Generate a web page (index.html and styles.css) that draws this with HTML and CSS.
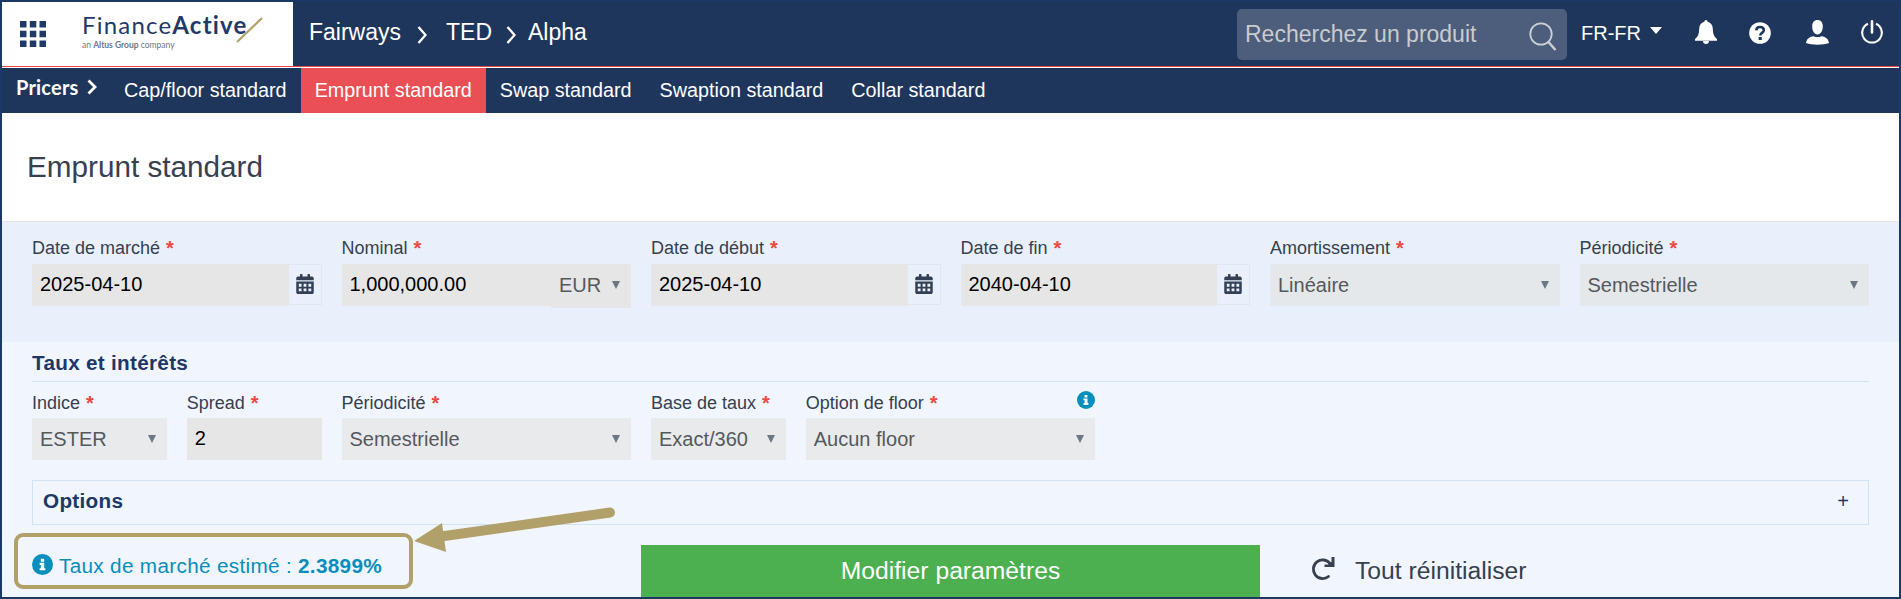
FILE: index.html
```
<!DOCTYPE html>
<html lang="fr">
<head>
  <meta charset="UTF-8">
  <meta name="viewport" content="width=device-width, initial-scale=1">
  <title>Emprunt standard</title>
  <link rel="stylesheet" href="styles.css">
</head>
<body>

  <svg class="sprite" width="0" height="0">
    <symbol id="icon-calendar" viewBox="0 0 448 512">
      <path fill="currentColor" fill-rule="evenodd" d="M0 464c0 26.500 21.500 48 48 48h352c26.500 0 48-21.500 48-48V192H0v272zM64 252h72v72h-72zM188 252h72v72h-72zM312 252h72v72h-72zM64 372h72v72h-72zM188 372h72v72h-72zM312 372h72v72h-72zM400 64h-48V16c0-9-7-16-16-16h-32c-9 0-16 7-16 16v48H160V16c0-9-7-16-16-16h-32c-9 0-16 7-16 16v48H48C21.500 64 0 85.500 0 112v48h448v-48c0-26.500-21.500-48-48-48z"/>
    </symbol>
    <symbol id="icon-info" viewBox="0 0 22 22">
      <circle cx="11" cy="11" r="11" fill="currentColor"/>
      <path fill="#fff" d="M9.200 5h3.600v3H9.200zM8 9.200h4.800v5.600H14V17H8v-2.200h1.300v-3.400H8z"/>
    </symbol>
  </svg>

  <header class="topbar">
    <div class="brand">
      <svg class="apps" viewBox="0 0 26 26" width="26" height="26">
        <path fill="#1f3a68" d="M0 0h6.500v6.500H0zM9.800 0h6.500v6.500h-6.500zM19.500 0H26v6.500h-6.500zM0 9.800h6.500v6.500H0zM9.800 9.800h6.500v6.500h-6.500zM19.500 9.800H26v6.500h-6.500zM0 19.500h6.500V26H0zM9.800 19.500h6.500V26h-6.500zM19.500 19.500H26V26h-6.500z"/>
      </svg>
      <div class="logo">
        <div class="logo-name">Finance<b>Active</b></div>
        <div class="logo-sub">an <b>Altus Group</b> company</div>
        <svg class="logo-slash" viewBox="0 0 28 26" width="28" height="26"><path d="M1 25 26 1" stroke="#b2a06b" stroke-width="2.200"/></svg>
      </div>
    </div>
    <nav class="breadcrumb">
      <span class="crumb-1">Fairways</span>
      <svg viewBox="0 0 10 18" width="10" height="18"><path d="M1.500 1 8.500 9 1.500 17" fill="none" stroke="#fff" stroke-width="2.300"/></svg>
      <span class="crumb-2">TED</span>
      <svg viewBox="0 0 10 18" width="10" height="18"><path d="M1.500 1 8.500 9 1.500 17" fill="none" stroke="#fff" stroke-width="2.300"/></svg>
      <span class="crumb-3">Alpha</span>
    </nav>
    <div class="search">
      <span>Recherchez un produit</span>
      <svg viewBox="0 0 28 29" width="28" height="29"><circle cx="12" cy="12" r="10.700" fill="none" stroke="#ccd0d6" stroke-width="1.800"/><path d="M19 19.500 26.500 28" stroke="#ccd0d6" stroke-width="2.500"/></svg>
    </div>
    <div class="lang">FR-FR <i class="caret"></i></div>
    <div class="tools">
      <svg class="bell" viewBox="0 0 22 24" width="22" height="24"><path fill="#fff" d="M11 0c1 0 1.600.7 1.600 1.800 3.400.8 5.100 3.400 5.200 7 .1 5 1.200 8 4.200 10.200v1.700H0V19C3 16.800 4.100 13.800 4.200 8.800c.1-3.600 1.800-6.200 5.200-7C9.400.7 10 0 11 0zM8 21h6c0 1.800-1.200 3-3 3s-3-1.200-3-3z"/></svg>
      <svg class="help" viewBox="0 0 22 22" width="22" height="22"><circle cx="11" cy="11" r="10.800" fill="#fff"/><path d="M7.300 8.300C7.500 6 9 5 11 5c2.200 0 3.800 1.200 3.800 3.200 0 2.700-3.500 2.700-3.500 5.200" fill="none" stroke="#1f365c" stroke-width="2.600"/><path fill="#1f365c" d="M9.600 15h3.200v3H9.600z"/></svg>
      <svg class="user" viewBox="0 0 23 25" width="23" height="25"><path fill="#fff" d="M11.500 0c3.500 0 5.300 2.500 5.300 6.300 0 4.500-2 8.200-5.300 8.200S6.200 10.800 6.200 6.300C6.200 2.500 8 0 11.500 0zM0 23c.5-4 3-6 7.500-6.800 2.500 1.200 5.500 1.200 8 0C20 17 22.500 19 23 23c-6 2.200-17 2.200-23 0z"/></svg>
      <svg class="power" viewBox="0 0 22 24" width="22" height="24"><path d="M7 3.800a9.800 9.800 0 1 0 8 0" fill="none" stroke="#fff" stroke-width="2.100"/><path d="M11 1.300v11.200" stroke="#fff" stroke-width="2.600" stroke-linecap="round"/></svg>
    </div>
  </header>

  <nav class="subnav">
    <div class="pricers">Pricers <svg viewBox="0 0 10 16" width="10" height="16"><path d="M1.500 1.500 8 8 1.500 14.500" fill="none" stroke="#fff" stroke-width="2.800"/></svg></div>
    <a>Cap/floor standard</a>
    <a class="active">Emprunt standard</a>
    <a>Swap standard</a>
    <a>Swaption standard</a>
    <a>Collar standard</a>
  </nav>

  <h1>Emprunt standard</h1>

  <section class="main-params">
    <div class="field wide">
      <label>Date de marché <em>*</em></label>
      <div class="group">
        <div class="input">2025-04-10</div>
        <div class="cal"><svg width="18" height="20"><use href="#icon-calendar"/></svg></div>
      </div>
    </div>
    <div class="field wide">
      <label>Nominal <em>*</em></label>
      <div class="group">
        <div class="input">1,000,000.00</div>
        <div class="select currency">EUR <i class="arrow"></i></div>
      </div>
    </div>
    <div class="field wide">
      <label>Date de début <em>*</em></label>
      <div class="group">
        <div class="input">2025-04-10</div>
        <div class="cal"><svg width="18" height="20"><use href="#icon-calendar"/></svg></div>
      </div>
    </div>
    <div class="field wide">
      <label>Date de fin <em>*</em></label>
      <div class="group">
        <div class="input">2040-04-10</div>
        <div class="cal"><svg width="18" height="20"><use href="#icon-calendar"/></svg></div>
      </div>
    </div>
    <div class="field wide">
      <label>Amortissement <em>*</em></label>
      <div class="select">Linéaire <i class="arrow"></i></div>
    </div>
    <div class="field wide">
      <label>Périodicité <em>*</em></label>
      <div class="select">Semestrielle <i class="arrow"></i></div>
    </div>
  </section>

  <section class="rates">
    <h2>Taux et intérêts</h2>
    <div class="rates-row">
      <div class="field">
        <label>Indice <em>*</em></label>
        <div class="select">ESTER <i class="arrow"></i></div>
      </div>
      <div class="field">
        <label>Spread <em>*</em></label>
        <div class="input">2</div>
      </div>
      <div class="field wide">
        <label>Périodicité <em>*</em></label>
        <div class="select">Semestrielle <i class="arrow"></i></div>
      </div>
      <div class="field">
        <label>Base de taux <em>*</em></label>
        <div class="select">Exact/360 <i class="arrow"></i></div>
      </div>
      <div class="field wide">
        <label>Option de floor <em>*</em><svg class="hint" width="18" height="18"><use href="#icon-info"/></svg></label>
        <div class="select">Aucun floor <i class="arrow"></i></div>
      </div>
    </div>
    <div class="options">
      <h2>Options</h2>
      <span>+</span>
    </div>
  </section>

  <footer class="actions">
    <div class="estimate">
      <svg width="21" height="21"><use href="#icon-info"/></svg>
      <span>Taux de marché estimé : <b>2.3899%</b></span>
    </div>
    <button class="submit-btn">Modifier paramètres</button>
    <div class="reset">
      <svg viewBox="0 0 24 24" width="24" height="24"><path d="M17.500 19.500A9.300 9.300 0 1 1 19 6.500" fill="none" stroke="#36404f" stroke-width="2.800" stroke-linecap="round"/><path fill="#36404f" d="M23.500 0v10h-10V7.500h3.500L20.500 5V0z"/></svg>
      Tout réinitialiser
    </div>
    <svg class="pointer" viewBox="0 0 202 48" width="202" height="48">
      <path d="M27 29.500 196 5.500" stroke="#b2a06b" stroke-width="10" stroke-linecap="round"/>
      <path d="M0 34 28 16 32 45z" fill="#b2a06b"/>
    </svg>
  </footer>

</body>
</html>
```
FILE: styles.css
```
* {
  box-sizing: border-box;
}

body {
  margin: 0;
  height: 599px;
  border: 2px solid #1c3866;
  background-color: #f1f6fe;
  font-family: "Liberation Sans", Arial, sans-serif;
  font-size: 20px;
  color: #36404f;
  overflow: hidden;
}

svg {
  display: block;
  flex-shrink: 0;
}

.sprite {
  position: absolute;
}

/* top bar */
.topbar {
  display: flex;
  height: 66px;
  background-color: #1f365c;
  border-bottom: 1px solid #fff;
  box-shadow: inset 0 -1px #e8474c;
  color: #fff;
}

.brand {
  display: flex;
  width: 291px;
  height: 64px;
  padding: 19px 0 0 18px;
  background-color: #fff;
}

.logo {
  position: relative;
  margin: -10px 0 0 36px;
  font-family: Lato, sans-serif;
  color: #1f3a68;
}

.logo-name {
  font-size: 24px;
  line-height: 28px;
  letter-spacing: 1.200px;
  white-space: nowrap;
}

.logo-sub {
  font-size: 8.500px;
  line-height: 12px;
  color: #6c7687;
}

.logo-slash {
  position: absolute;
  left: 154px;
  top: 6px;
}

.breadcrumb {
  display: flex;
  align-items: center;
  height: 60px;
  padding-left: 16px;
  font-size: 23px;
}

.breadcrumb svg {
  margin-top: 5px;
}

.crumb-1 {
  margin-right: 16px;
}

.crumb-2 {
  margin: 0 14px 0 19px;
}

.crumb-3 {
  margin-left: 12px;
}

.search {
  display: flex;
  justify-content: space-between;
  width: 330px;
  height: 51px;
  margin: 7px 0 0 auto;
  padding: 13px 10px 0 8px;
  border-radius: 5px;
  background-color: #4c5e7b;
  font-size: 23px;
  line-height: 25px;
  color: #c9cbcf;
}

.lang {
  display: flex;
  width: 108px;
  padding: 20px 0 0 14px;
  font-size: 20px;
}

.caret {
  margin: 5px 0 0 9px;
  border: 6px solid transparent;
  border-top: 7px solid #fff;
  height: 0;
}

.tools {
  display: flex;
  width: 224px;
  padding: 18px 0 0 20px;
}

.help {
  margin: 2px 0 0 32px;
}

.user {
  margin-left: 35px;
}

.power {
  margin-left: 32px;
}

/* pricer tabs */
.subnav {
  display: flex;
  height: 45px;
  background-color: #1f365c;
  font-size: 19.770px;
  color: #fff;
}

.pricers {
  display: flex;
  justify-content: space-between;
  width: 108px;
  padding: 6px 13px 0 14px;
  font-family: Lato, sans-serif;
  font-weight: bold;
  font-size: 20px;
  letter-spacing: 0.200px;
  line-height: 27px;
}

.pricers svg {
  margin-top: 5px;
}

.subnav a {
  padding: 0 14px;
  line-height: 45px;
}

.subnav .active {
  background-color: #e94f54;
}

h1 {
  margin: 0;
  height: 109px;
  padding-left: 25px;
  border-bottom: 1px solid #e2e5ea;
  background-color: #fff;
  font-size: 29.700px;
  font-weight: normal;
  line-height: 107px;
}

/* form fields */
.main-params,
.rates-row {
  display: grid;
  grid-template-columns: repeat(12, 1fr);
  column-gap: 20px;
}

.main-params {
  height: 120px;
  padding: 15px 30px 0 30px;
  background-color: #e9f0fc;
}

.wide {
  grid-column: span 2;
}

.field label {
  display: flex;
  height: 27px;
  gap: 6px;
  font-size: 18px;
  line-height: 24px;
}

.main-params label {
  line-height: 23px;
}

.field em {
  font-style: normal;
  font-weight: bold;
  font-size: 20px;
  color: #f0483e;
}

.group {
  display: flex;
}

.input,
.select {
  display: flex;
  justify-content: space-between;
  flex: 1;
  height: 42px;
  padding: 0 11px 0 8px;
  background-color: #e6e6e6;
  line-height: 40px;
  color: #000;
}

.select {
  background-color: #e5e8ea;
  line-height: 43px;
  color: #55585c;
}

.arrow {
  margin-top: 17px;
  border: 4.500px solid transparent;
  border-top: 8px solid #6c7785;
  height: 0;
}

.currency {
  flex: 0 0 80px;
  height: 44px;
  background-color: #e6e6e6;
}

.cal {
  width: 33px;
  height: 41px;
  padding: 9px 0 0 7px;
  border: 1px solid #e3e6ec;
  border-left: 0;
  color: #333f54;
}

/* rates */
.rates {
  padding: 0 30px 0 30px;
}

h2 {
  margin: 0;
  font-size: 20.700px;
  letter-spacing: 0.300px;
  color: #1c3866;
}

.rates > h2 {
  height: 40px;
  border-bottom: 1px solid #d0e2f6;
  line-height: 42px;
}

.rates-row {
  padding-top: 9px;
}

.rates .select {
  background-color: #e9eaec;
}

.hint {
  margin-left: auto;
  color: #088ebc;
}

.options {
  display: flex;
  justify-content: space-between;
  height: 45px;
  margin-top: 20px;
  padding: 0 19px 0 10px;
  border: 1px solid #d0e2f6;
  line-height: 40px;
  color: #1c3866;
}

/* bottom row */
.actions {
  position: relative;
  display: flex;
  height: 72px;
}

.estimate {
  display: flex;
  gap: 6px;
  width: 399px;
  height: 56px;
  margin: 8px 0 0 12px;
  padding: 17px 0 0 14px;
  border: 4px solid #b2a06b;
  border-radius: 9px;
  font-size: 20.750px;
  letter-spacing: 0.300px;
  line-height: 23px;
  color: #088ebc;
}

.submit-btn {
  width: 619px;
  height: 52px;
  margin: 20px 0 0 228px;
  border: none;
  background-color: #4caf50;
  font-family: inherit;
  font-size: 24.700px;
  color: #fff;
}

.reset {
  display: flex;
  gap: 20px;
  margin: 32px 0 0 51px;
  font-size: 24.700px;
  line-height: 28px;
}

/* arrow drawn over the options box */
.pointer {
  position: absolute;
  left: 412px;
  top: -18px;
}
```
